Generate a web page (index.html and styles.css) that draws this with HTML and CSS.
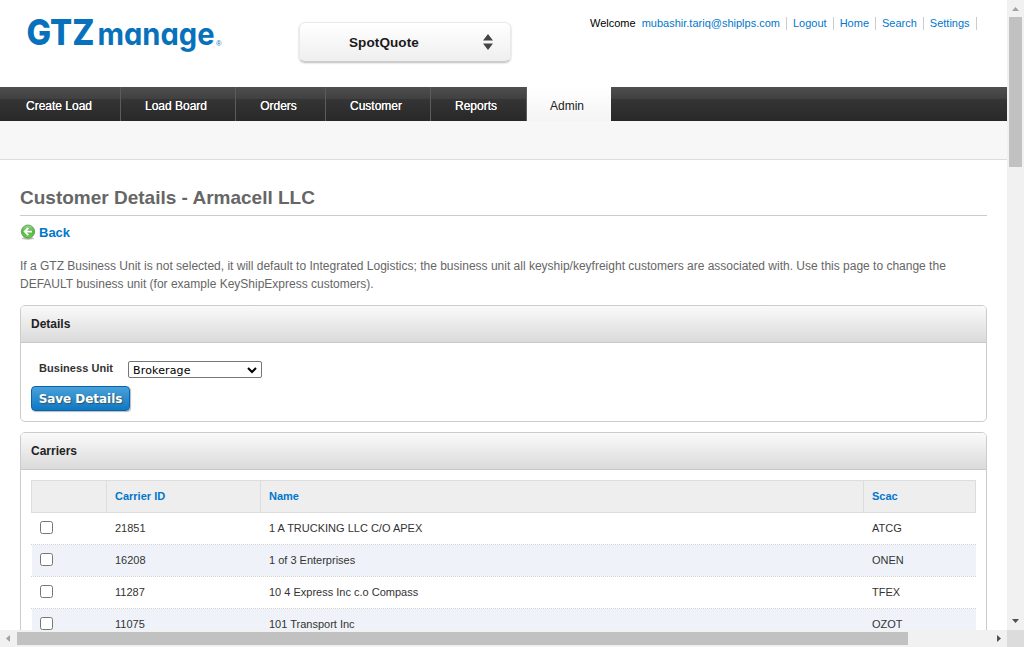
FILE: index.html
```html
<!DOCTYPE html>
<html lang="en">
<head>
<meta charset="utf-8">
<title>GTZmanage - Customer Details</title>
<link rel="stylesheet" href="styles.css">
</head>
<body>
<div class="window">
  <div class="page">
    <header class="header">
      <svg class="logo" width="200" height="45" viewBox="0 0 200 45" role="img" aria-label="GTZmanage">
        <text class="logo-gtz" x="-0.500" y="31" textLength="68" lengthAdjust="spacingAndGlyphs">GTZ</text>
        <text class="logo-manage" x="70.500" y="31" textLength="117" lengthAdjust="spacingAndGlyphs">manage</text>
        <text class="logo-reg" x="189" y="31.500">®</text>
      </svg>
      <div class="switcher">
        <span class="switcher-label">SpotQuote</span>
        <svg width="10" height="16" viewBox="0 0 10 16"><path fill="#444" d="M5 0l5 6.500H0zM0 9.500h10L5 16z"/></svg>
      </div>
      <div class="user-links">
        <span class="welcome">Welcome</span><a class="user-link">mubashir.tariq@shiplps.com</a><a class="user-link">Logout</a><a class="user-link">Home</a><a class="user-link">Search</a><a class="user-link">Settings</a>
      </div>
    </header>
    <nav class="nav">
      <a class="nav-item nav-create">Create Load</a>
      <a class="nav-item nav-board">Load Board</a>
      <a class="nav-item nav-orders">Orders</a>
      <a class="nav-item nav-customer">Customer</a>
      <a class="nav-item nav-reports">Reports</a>
      <a class="nav-item nav-active">Admin</a>
    </nav>
    <div class="subnav"></div>
    <main class="content">
      <h1 class="title">Customer Details - Armacell LLC</h1>
      <a class="back">
        <svg width="16" height="16" viewBox="0 0 16 16">
          <defs><linearGradient id="g" x1="0" y1="0" x2="0" y2="1"><stop offset="0" stop-color="#a0d391"/><stop offset=".5" stop-color="#55b642"/><stop offset="1" stop-color="#6fce4f"/></linearGradient></defs>
          <ellipse cx="8" cy="14.400" rx="6" ry="1.300" fill="#bbb"/>
          <circle cx="8" cy="7.600" r="6.600" fill="url(#g)" stroke="#4d9543" stroke-width=".8"/>
          <path d="M12 7.600H4.800M8.300 4L4.700 7.600l3.600 3.600" fill="none" stroke="#fff" stroke-width="1.900"/>
        </svg>
        <span>Back</span>
      </a>
      <p class="intro">If a GTZ Business Unit is not selected, it will default to Integrated Logistics; the business unit all keyship/keyfreight customers are associated with. Use this page to change the<br>DEFAULT business unit (for example KeyShipExpress customers).</p>
      <section class="panel">
        <h2 class="panel-head">Details</h2>
        <div class="details">
          <div class="field">
            <label class="field-label">Business Unit</label>
            <div class="select"><span>Brokerage</span><svg width="10" height="7" viewBox="0 0 10 7"><path d="M1 1l4 4 4-4" fill="none" stroke="#000" stroke-width="2"/></svg></div>
          </div>
          <button class="save">Save Details</button>
        </div>
      </section>
      <section class="panel carriers">
        <h2 class="panel-head">Carriers</h2>
        <div class="table">
          <div class="row row-head"><span></span><span>Carrier ID</span><span>Name</span><span>Scac</span></div>
          <div class="row"><span><i class="check"></i></span><span>21851</span><span>1 A TRUCKING LLC C/O APEX</span><span>ATCG</span></div>
          <div class="row row-alt"><span><i class="check"></i></span><span>16208</span><span>1 of 3 Enterprises</span><span>ONEN</span></div>
          <div class="row"><span><i class="check"></i></span><span>11287</span><span>10 4 Express Inc c.o Compass</span><span>TFEX</span></div>
          <div class="row row-alt"><span><i class="check"></i></span><span>11075</span><span>101 Transport Inc</span><span>OZOT</span></div>
        </div>
      </section>
    </main>
  </div>
  <div class="vbar">
    <svg width="17" height="17"><path d="M5 11h7L8.500 7z" fill="#a3a3a3"/></svg>
    <div class="vthumb"></div>
    <svg class="vdown" width="17" height="17"><path d="M5 6h7l-3.500 4z" fill="#505050"/></svg>
  </div>
  <div class="hbar">
    <svg width="17" height="17"><path d="M10 5v7L6 8.500z" fill="#a3a3a3"/></svg>
    <div class="hthumb"></div>
    <svg class="hright" width="17" height="17"><path d="M7 5v7l4-3.500z" fill="#505050"/></svg>
  </div>
  <div class="corner"></div>
</div>
</body>
</html>
```
FILE: styles.css
```css
* { box-sizing: border-box; }
body { margin: 0; overflow: hidden; background: #fff; font-family: "Liberation Sans", Arial, sans-serif; font-size: 12px; color: #333; }
svg { display: block; flex: none; }
.window { display: grid; grid-template-columns: 1007px 17px; grid-template-rows: 630px 17px; width: 1024px; height: 647px; }
.page { overflow: hidden; }

.header { display: flex; height: 87px; }
.logo { margin: 14px 72px 0 27px; overflow: visible; }
.logo-gtz { font: 800 36px Inter, sans-serif; fill: #0871bb; }
.logo-manage { font: 700 31px Inter, sans-serif; font-feature-settings: "cv11"; fill: #0871bb; }
.logo-reg { font: 7.500px "Liberation Sans", sans-serif; fill: #0871bb; }
.switcher { display: flex; align-items: center; width: 212px; height: 40px; margin-top: 22px; padding: 0 17px 0 49px; justify-content: space-between; border: 1px solid #e9e9e9; border-bottom-color: #ccc; border-radius: 6px; background: linear-gradient(#fff, #efefef); box-shadow: 0 1px 2px #bbb; }
.switcher-label { font-size: 13.500px; font-weight: bold; color: #1a1a1a; letter-spacing: .1px; }
.user-links { display: flex; margin: 17px 0 0 79px; height: 13px; font-size: 11px; line-height: 13px; white-space: nowrap; }
.welcome { color: #000; }
.user-link { padding: 0 6px; border-right: 1px solid #ccc; color: #0077cc; }

.nav { display: flex; height: 34px; background: linear-gradient(#4f4f4f, #404040 35%, #353535 36%, #282828); }
.nav-item { border-right: 1px solid #5c5c5c; line-height: 38px; text-align: center; color: #fff; text-shadow: 0 0 .5px #fff; }
.nav-create { width: 121px; padding-right: 2px; }
.nav-board { width: 115px; padding-right: 4px; }
.nav-orders { width: 90px; padding-right: 4px; }
.nav-customer { width: 105px; padding-right: 4px; }
.nav-reports { width: 96px; padding-right: 5px; }
.nav-active { width: 84px; padding-right: 4px; border: 0; background: linear-gradient(#fff, #f4f4f4); color: #222; text-shadow: none; }
.subnav { height: 39px; background: #f7f7f7; border-bottom: 1px solid #ddd; }

.content { padding: 0 20px; }
.title { margin: 0; height: 56px; padding-top: 26px; border-bottom: 1px solid #ccc; font-size: 19px; line-height: 23px; color: #666; }
.back { display: flex; align-items: center; gap: 3px; height: 16px; margin-top: 8px; font-size: 13px; font-weight: bold; color: #0077cc; }
.intro { margin: 17px 0 0; line-height: 18px; height: 48px; color: #666; white-space: nowrap; }
.panel { border: 1px solid #ccc; border-radius: 5px; overflow: hidden; }
.panel-head { margin: 0; height: 37px; padding-left: 10px; border-bottom: 1px solid #c8c8c8; background: linear-gradient(#fafafa, #dadada); font-size: 12px; line-height: 36px; color: #222; }
.details { height: 78px; padding: 18px 10px 0; }
.field { display: flex; height: 17px; padding-left: 8px; }
.field-label { width: 89px; font-size: 11px; font-weight: bold; line-height: 14px; letter-spacing: .05px; }
.select { display: flex; align-items: center; justify-content: space-between; width: 134px; height: 17px; padding: 1px 4px 0; border: 1px solid #767676; border-radius: 2px; font: 11px "DejaVu Sans", sans-serif; letter-spacing: .15px; color: #000; }
.save { display: block; width: 99px; height: 25px; margin-top: 8px; padding: 0; border: 1px solid #0862ae; border-radius: 4px; background: linear-gradient(#4aa1d8, #0f78c2); box-shadow: 1px 1px 1px #bbb; font: bold 12px "DejaVu Sans", sans-serif; letter-spacing: -.05px; color: #fff; text-shadow: 1px 1px 1px #356; white-space: nowrap; }
.carriers { margin-top: 10px; height: 300px; }
.table { width: 945px; margin: 10px 0 0 10px; font-size: 11px; }
.row { display: grid; grid-template-columns: 75px 154px 603px 112px; height: 32px; padding-left: 1px; line-height: 31px; border-bottom: 1px dotted #d0d0d0; }
.row span { padding-left: 8px; }
.row-alt { background: #eff3f9 content-box; }
.row-head { height: 33px; padding: 0; grid-template-columns: 74px 154px 603px 112px; border: 1px solid #ddd; background: #eee; color: #0077cc; font-weight: bold; }
.row-head span + span { border-left: 1px solid #ddd; }
.check { display: block; width: 13px; height: 13px; margin-top: 8px; border: 1px solid #767676; border-radius: 2.500px; background: #fff; }

.vbar { background: #f1f1f1; display: flex; flex-direction: column; }
.vthumb { width: 13px; height: 150px; margin-left: 2px; background: #c1c1c1; }
.vdown { margin-top: auto; }
.hbar { background: #f1f1f1; display: flex; }
.hthumb { width: 891px; height: 13px; margin-top: 2px; background: #c1c1c1; }
.hright { margin-left: auto; }
.corner { background: #dcdcdc; }
```
